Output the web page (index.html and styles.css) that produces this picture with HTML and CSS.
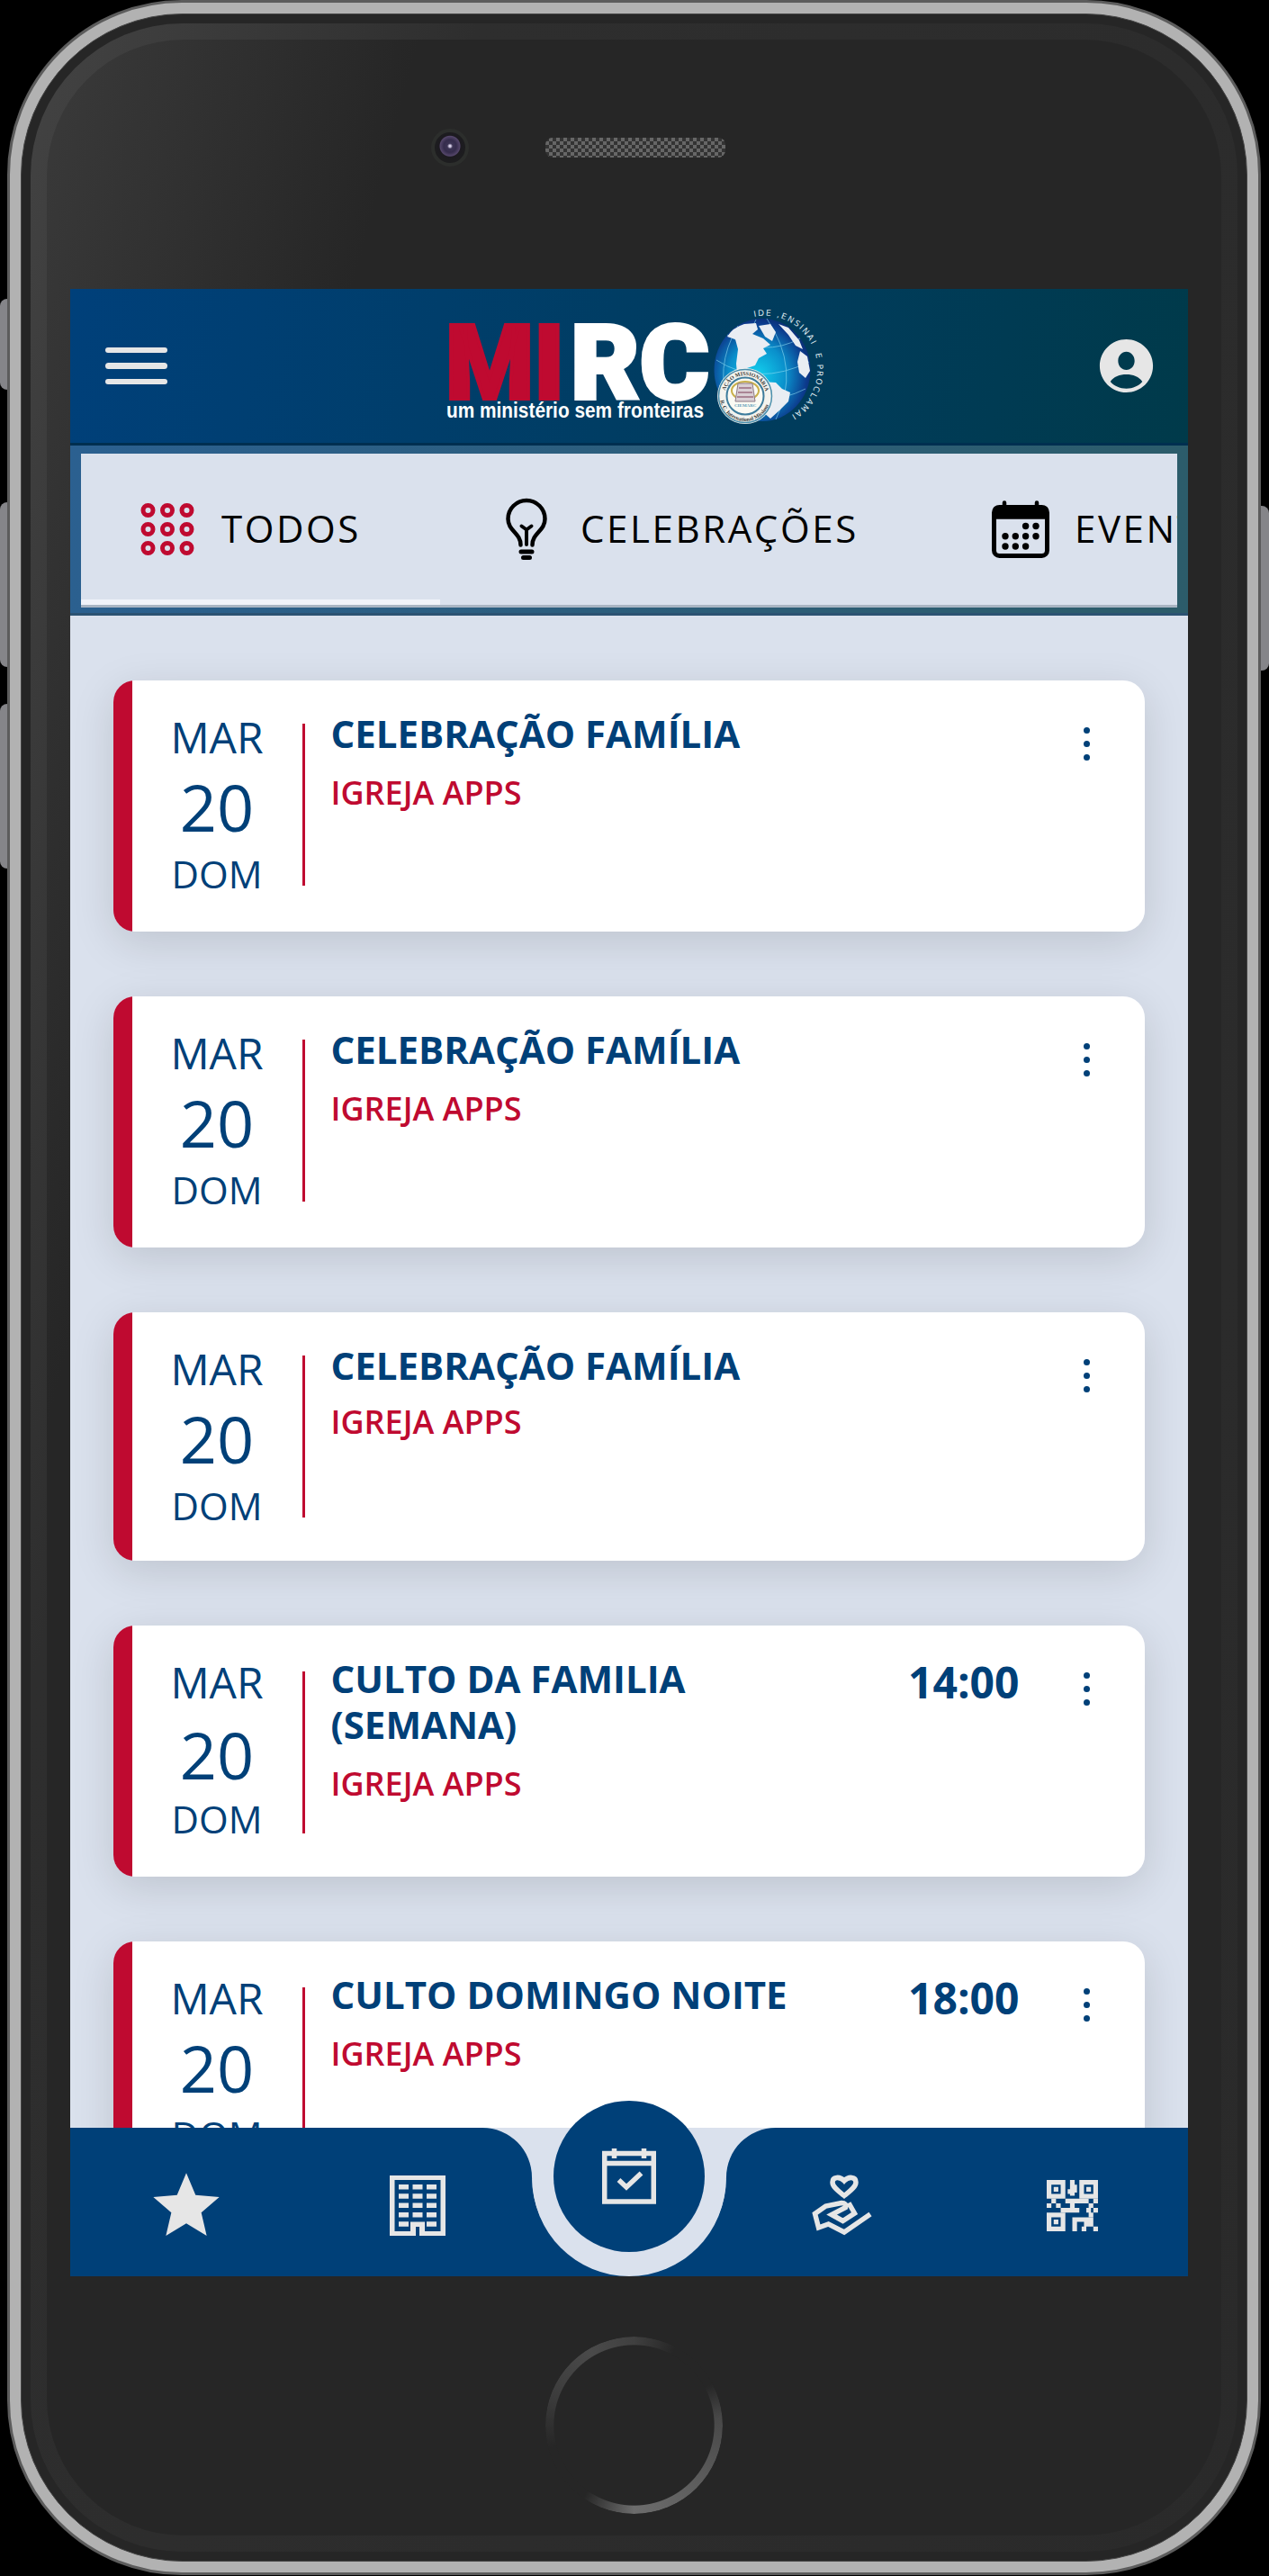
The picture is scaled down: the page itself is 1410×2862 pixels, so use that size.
FILE: index.html
```html
<!DOCTYPE html>
<html lang="pt-BR">
<head>
    <meta charset="UTF-8">
    <meta name="viewport" content="width=device-width, initial-scale=1.0">
    <title>Agenda</title>
    <link rel="stylesheet" href="styles.css">
</head>
<body>
    <div class="phone">
        <span class="side-button mute"></span>
        <span class="side-button volume-up"></span>
        <span class="side-button volume-down"></span>
        <span class="side-button power"></span>
        <div class="rim">
        <div class="edge">
        <div class="face">
            <div class="top-area">
                <span class="camera"></span>
                <span class="speaker"></span>
            </div>

            <div class="screen">
                <header class="header">
                    <div class="burger"><span></span><span></span><span></span></div>
                    <svg class="logo" viewBox="0 0 430 140">
                        <defs>
                            <radialGradient id="sea" cx="45%" cy="55%" r="60%">
                                <stop offset="0" stop-color="#12d0ee"/>
                                <stop offset="0.5" stop-color="#0a8fcb"/>
                                <stop offset="0.85" stop-color="#0c3a8c"/>
                                <stop offset="1" stop-color="#0a2a6c"/>
                            </radialGradient>
                            <path id="ring" d="M348 14 A58 59 0 0 1 372 130"/>
                            <path id="sealTop" d="M315 102 A23 23 0 0 1 361 102"/>
                            <path id="sealBottom" d="M310 102 A28 28 0 0 0 366 102"/>
                        </defs>
                        <text class="logo-mi" x="5" y="105" textLength="132" lengthAdjust="spacingAndGlyphs">MI</text>
                        <text class="logo-rc" x="144" y="105" textLength="154" lengthAdjust="spacingAndGlyphs">RC</text>
                        <text class="logo-sub" x="6" y="126" textLength="286" lengthAdjust="spacingAndGlyphs">um ministério sem fronteiras</text>
                        <!-- globo -->
                        <ellipse cx="357" cy="73" rx="53.500" ry="57" fill="url(#sea)"/>
                        <g fill="none" stroke="#8fdcf2" stroke-width="1" opacity=".6">
                            <path d="M306 62 Q352 92 409 64M318 34 Q358 60 399 38M310 92 Q358 118 405 94"/>
                            <path d="M350 17 Q322 70 344 129M362 16 Q400 72 372 128M330 24 Q302 72 322 118"/>
                        </g>
                        <g fill="#e9edf3">
                            <path d="M318 36 Q324 26 337 22 L350 21 352 28 346 33 358 38 366 45 358 49 362 55 353 60 349 68 340 71 336 75 342 82 350 85 346 88 337 84 329 77 328 66 330 50 327 39Z"/>
                            <path d="M353 24 L366 22 372 31 368 41 360 36Z"/>
                            <path d="M375 22 L386 26 398 40 402 50 394 46 386 34Z"/>
                            <path d="M399 52 L407 58 410 74 405 82 398 76 396 64Z"/>
                            <path d="M356 86 L372 87 379 94 388 98 386 108 376 118 366 127 358 120 360 106 354 98Z"/>
                        </g>
                        <circle cx="338" cy="102" r="31" fill="#f3f3ee"/>
                        <circle cx="338" cy="102" r="29.500" fill="none" stroke="#4a8fae" stroke-width="1.500"/>
                        <circle cx="338" cy="102" r="20.500" fill="#fbfaf3" stroke="#3d7c9c" stroke-width="2"/>
                        <text class="seal-text"><textPath href="#sealTop" startOffset="6">AÇÃO MISSIONÁRIA</textPath></text>
                        <text class="seal-text"><textPath href="#sealBottom" startOffset="5">R. C. International Missions</textPath></text>
                        <ellipse cx="338" cy="96" rx="15" ry="10" fill="none" stroke="#c9b04a" stroke-width="2"/>
                        <path d="M330 88 h16 l3 20 h-22Z" fill="#d9cfd4" stroke="#8c7a86" stroke-width="1"/>
                        <path d="M331 93h14M330 98h16M329 103h18" stroke="#9a6d80" stroke-width="1.500"/>
                        <text class="seal-name" x="326" y="114">CIEMARC</text>
                        <text class="ring-text"><textPath href="#ring">IDE ,ENSINAI&#160; E PROCLAMAI</textPath></text>
                    </svg>
                    <svg class="account" viewBox="0 0 24 24"><path d="M12 2C6.480 2 2 6.480 2 12s4.480 10 10 10 10-4.480 10-10S17.520 2 12 2zm0 4.700c1.700 0 3.100 1.500 3.100 3.400S13.700 13.500 12 13.500s-3.100-1.500-3.100-3.400S10.300 6.700 12 6.700zM12 20.500c-2.500 0-4.700-1-6-2.600 1.200-1.800 3.500-2.700 6-2.700s4.800.9 6 2.700c-1.300 1.600-3.500 2.600-6 2.600z"/></svg>
                </header>

                <nav class="tabs">
                    <div class="tab-list">
                        <a class="tab tab-all active">
                            <svg class="tab-icon" viewBox="0 0 72 72" fill="none" stroke="#bf0a30" stroke-width="5">
                                <circle cx="14.500" cy="15" r="5.500"/><circle cx="36" cy="15" r="5.500"/><circle cx="57.500" cy="15" r="5.500"/>
                                <circle cx="14.500" cy="36" r="5.500"/><circle cx="36" cy="36" r="5.500"/><circle cx="57.500" cy="36" r="5.500"/>
                                <circle cx="14.500" cy="57" r="5.500"/><circle cx="36" cy="57" r="5.500"/><circle cx="57.500" cy="57" r="5.500"/>
                            </svg>
                            <span>TODOS</span>
                        </a>
                        <a class="tab tab-celebrations">
                            <svg class="tab-icon" viewBox="0 0 72 72" fill="none" stroke="#000" stroke-width="4.500" stroke-linecap="round" stroke-linejoin="round">
                                <path d="M29.500 53.500 C29.500 40 15.500 38 15.500 24.500 A20.500 20.500 0 0 1 56.500 24.500 C56.500 38 42.500 40 42.500 53.500"/>
                                <path d="M36 36V53M30.500 32.500L36 36.500 41.500 32.500" stroke-width="4"/>
                                <path d="M30 61H42M32.500 67.500H39.500" stroke-width="5"/>
                            </svg>
                            <span>CELEBRAÇÕES</span>
                        </a>
                        <a class="tab tab-events">
                            <svg class="tab-icon" viewBox="0 0 72 72">
                                <rect x="6.500" y="11.500" width="59" height="54" rx="6" fill="none" stroke="#000" stroke-width="5"/>
                                <path d="M5 24.700V15a5 5 0 0 1 5-5H62a5 5 0 0 1 5 5V24.700Z"/>
                                <path d="M18 6.500V12M54 6.500V12" stroke="#000" stroke-width="4.500" stroke-linecap="round"/>
                                <circle cx="41.600" cy="32.500" r="3.700"/><circle cx="53" cy="32.500" r="3.700"/>
                                <circle cx="19" cy="43.800" r="3.700"/><circle cx="30.300" cy="43.800" r="3.700"/><circle cx="41.600" cy="43.800" r="3.700"/><circle cx="53" cy="43.800" r="3.700"/>
                                <circle cx="19" cy="55" r="3.700"/><circle cx="30.300" cy="55" r="3.700"/><circle cx="41.600" cy="55" r="3.700"/>
                            </svg>
                            <span>EVENTOS</span>
                        </a>
                    </div>
                </nav>

                <main class="events">
                    <article class="card">
                        <div class="date"><span class="month">MAR</span><span class="day">20</span><span class="weekday">DOM</span></div>
                        <div class="divider"></div>
                        <div class="info"><h2>CELEBRAÇÃO FAMÍLIA</h2><p>IGREJA APPS</p></div>
                        <div class="more"><i></i><i></i><i></i></div>
                    </article>
                    <article class="card">
                        <div class="date"><span class="month">MAR</span><span class="day">20</span><span class="weekday">DOM</span></div>
                        <div class="divider"></div>
                        <div class="info"><h2>CELEBRAÇÃO FAMÍLIA</h2><p>IGREJA APPS</p></div>
                        <div class="more"><i></i><i></i><i></i></div>
                    </article>
                    <article class="card short">
                        <div class="date"><span class="month">MAR</span><span class="day">20</span><span class="weekday">DOM</span></div>
                        <div class="divider"></div>
                        <div class="info"><h2>CELEBRAÇÃO FAMÍLIA</h2><p>IGREJA APPS</p></div>
                        <div class="more"><i></i><i></i><i></i></div>
                    </article>
                    <article class="card timed low">
                        <div class="date"><span class="month">MAR</span><span class="day">20</span><span class="weekday">DOM</span></div>
                        <div class="divider"></div>
                        <div class="info"><h2>CULTO DA FAMILIA (SEMANA)</h2><p>IGREJA APPS</p></div>
                        <time>14:00</time>
                        <div class="more"><i></i><i></i><i></i></div>
                    </article>
                    <article class="card timed">
                        <div class="date"><span class="month">MAR</span><span class="day">20</span><span class="weekday">DOM</span></div>
                        <div class="divider"></div>
                        <div class="info"><h2>CULTO DOMINGO NOITE</h2><p>IGREJA APPS</p></div>
                        <time>18:00</time>
                        <div class="more"><i></i><i></i><i></i></div>
                    </article>
                </main>

                <nav class="bottom-nav">
                    <svg class="nav-shape" viewBox="0 0 1242 165">
                        <rect x="440" width="360" height="165" fill="#dae1ed"/>
                        <path d="M0 0H458A55 55 0 0 1 513 55A108 108 0 0 0 729 55A55 55 0 0 1 784 0H1242V165H0Z" fill="#004078"/>
                        <path d="M513.500 57A107.500 108 0 0 0 728.500 57Z" fill="#dae1ed"/>
                    </svg>
                    <svg class="nav-icon" viewBox="0 0 24 24"><path d="M12 17.270L18.180 21l-1.640-7.030L22 9.240l-7.190-.61L12 2 9.190 8.630 2 9.240l5.460 4.730L5.820 21z"/></svg>
                    <svg class="nav-icon" viewBox="0 0 88 88">
                        <path d="M13 10H75V77H46V67H42V77H13ZM18.500 15V72H36V61.500H52V72H69.500V15Z" fill-rule="evenodd"/>
                        <path d="M23 20h11v5.500h-11zM38.500 20h11v5.500h-11zM54 20h11v5.500h-11zM23 30.200h11v5.500h-11zM38.500 30.200h11v5.500h-11zM54 30.200h11v5.500h-11zM23 40.400h11v5.500h-11zM38.500 40.400h11v5.500h-11zM54 40.400h11v5.500h-11zM23 51h11v5.500h-11zM38.500 51h11v5.500h-11zM54 51h11v5.500h-11zM23 61.200h11v5.500h-11zM54 61.200h11v5.500h-11z"/>
                    </svg>
                    <span></span>
                    <svg class="nav-icon line" viewBox="0 0 88 88">
                        <path d="M47 32.500C41 27.500 34 23 34 17.500C34 11.500 42 10.500 47 16C52 10.500 60 11.500 60 17.500C60 23 53 27.500 47 32.500Z"/>
                        <path d="M76 53L47 73 29.500 64 18.500 68 14.500 52.500 26.500 44 44 40.500Q50 40.500 48.500 45.500L33 53.500 45.500 60.500 58.500 52 52 40.500"/>
                    </svg>
                    <svg class="nav-icon" viewBox="0 0 88 88">
                        <g transform="translate(15 15) scale(5.180)">
                            <path d="M0 0H4V4H0ZM1 1V3H3V1ZM7 0H11V4H7ZM8 1V3H10V1ZM0 7H4V11H0ZM1 8V10H3V8Z" fill-rule="evenodd"/>
                            <path d="M1.500 1.500h1v1h-1zM8.500 1.500h1v1h-1zM1.500 8.500h1v1h-1z"/>
                            <path d="M5 0h1v1h.5v1.700h-.5v.7h-1v-.4h-.5v-1h.5zM1 4h1v1h-1zM0 5h1v1h-1zM2 5h1v1h-1zM4 4h4v1h-2v1h1v1h-4v-1h2v-1h-1zM8 4h1v1h-1zM10 4h1v1h-1zM9 5h1v1h-1zM10 6h1v1h-1zM8.500 6h1v1h-1zM9 7h1v1h-1z"/>
                            <path d="M5.500 8h4.500v1h-1v1h-1v-1h-1.500v2h-1zM7.500 10h1v1h-1zM9 9h1v1h-1zM10 10h1v1h-1z"/>
                        </g>
                    </svg>
                    <a class="nav-main">
                        <svg viewBox="0 0 60 62" fill="none" stroke="#e6e6e6" stroke-width="5.500">
                            <rect x="2.750" y="5.500" width="54.500" height="53.500"/>
                            <path d="M2 16.500H58M13.500 0V11M46.500 0V11"/>
                            <path d="M18.500 35L27 43 43.500 27.500"/>
                        </svg>
                    </a>
                </nav>
            </div>

            <div class="home-button"></div>
        </div>
        </div>
        </div>
    </div>
</body>
</html>
```
FILE: styles.css
```css
* {
    box-sizing: border-box;
}

body {
    margin: 0;
    height: 2862px;
    background: #000;
    font-family: "Open Sans", "Noto Sans", sans-serif;
    overflow: hidden;
}

/* phone frame */
.phone {
    position: relative;
    width: 1393px;
    height: 2861px;
    margin: 0 0 0 8px;
    background: #b2b2b2;
    border: 3px solid #5c5c5c;
    border-radius: 194px;
    padding: 12px;
}

.rim {
    height: 100%;
    padding: 10px;
    background: #262626;
    border: 1px solid #444;
    border-radius: 180px;
}

.edge {
    height: 100%;
    padding: 18px;
    border-radius: 169px;
    background: linear-gradient(105deg, #434343, #2e2e2e 480px, #2a2a2a);
}

.face {
    height: 100%;
    padding: 0 26px;
    border-radius: 152px;
    background: linear-gradient(105deg, #3a3a3a, #262626 400px);
}

.side-button {
    position: absolute;
    width: 8px;
    background: #858589;
}

.mute, .volume-up, .volume-down {
    left: -11px;
    border-radius: 8px 0 0 8px;
}

.mute {
    top: 329px;
    height: 101px;
}

.volume-up {
    top: 555px;
    height: 183px;
}

.volume-down {
    top: 779px;
    height: 183px;
}

.power {
    right: -12px;
    top: 559px;
    width: 9px;
    height: 183px;
    border-radius: 0 8px 8px 0;
}

.top-area {
    display: flex;
    align-items: center;
    height: 277px;
    padding: 0 0 38px 401px;
    gap: 85px;
}

.camera {
    width: 42px;
    height: 42px;
    border-radius: 50%;
    border: 4px solid #2c2e2c;
    background: radial-gradient(circle at 50% 45%, #d8d0e8 0 1px, #3c3454 3px, #352c4c 7px, #54466a 11px, #1c1a20 12px, #1d1d1f 16px);
}

.speaker {
    width: 200px;
    height: 22px;
    border-radius: 8px;
    background: repeating-conic-gradient(#666 0 25%, #333 0 50%) 0 0 / 8px 8px;
}

.screen {
    position: relative;
    width: 1242px;
    height: 2208px;
    overflow: hidden;
    background: #dae1ed;
}

/* header */
.header {
    display: flex;
    justify-content: space-between;
    align-items: center;
    height: 174px;
    padding: 0 33px 0 39px;
    background: linear-gradient(100deg, #00407a, #003c5c 65%, #003a4a);
    border-bottom: 3px solid #002f50;
}

.burger {
    display: flex;
    flex-direction: column;
    gap: 11px;
}

.burger span {
    width: 69px;
    height: 6.500px;
    border-radius: 4px;
    background: #e6e6e6;
}

.logo {
    width: 430px;
    height: 140px;
    margin: 2px 0 0 7px;
    overflow: visible;
}

.logo-mi, .logo-rc {
    font: 900 115px Roboto, Inter, sans-serif;
    fill: #bf0a30;
    stroke: #bf0a30;
    stroke-width: 4;
}

.logo-rc {
    fill: #fff;
    stroke: #fff;
}

.logo-sub {
    font: bold 24px "Liberation Sans", sans-serif;
    fill: #fff;
}

.ring-text {
    font: 9px "DejaVu Sans", sans-serif;
    letter-spacing: 1.700px;
    fill: #dfe8ee;
}

.seal-text {
    font: bold 6px "Liberation Serif", serif;
    fill: #333;
}

.seal-name {
    font: bold 5px "Liberation Serif", serif;
    fill: #5a9ab8;
}

.account {
    width: 71px;
    height: 71px;
    fill: #e6e6e6;
}

/* tabs */
.tabs {
    height: 189px;
    padding: 9px 12px;
    background: linear-gradient(100deg, #2b6090, #2c5d76 65%, #2c5c6a);
    border-bottom: 3px solid #2c5272;
}

.tab-list {
    display: flex;
    height: 171px;
    overflow: hidden;
    background: #dae1ed;
    border-bottom: 3px solid #a9b5c3;
}

.tab {
    display: flex;
    flex-shrink: 0;
    align-items: center;
    gap: 24px;
    padding-left: 60px;
    font-size: 42px;
    letter-spacing: 2.600px;
    color: #000;
}

.tab span {
    padding-bottom: 3px;
}

.tab.active {
    box-shadow: inset 0 -6px #f0f3f9;
}

.tab-all {
    width: 399px;
}

.tab-celebrations {
    width: 549px;
}

.tab-icon {
    width: 72px;
    height: 72px;
}

/* event cards */
.events {
    display: flex;
    flex-direction: column;
    gap: 72px;
    padding: 72px 48px 0;
}

.card {
    display: flex;
    flex-shrink: 0;
    height: 279px;
    padding-left: 21px;
    background: linear-gradient(90deg, #bf0a30 21px, #fff 21px);
    border-radius: 24px;
    box-shadow: 0 12px 48px rgba(0, 0, 0, .13);
    color: #004078;
}

.card.short {
    height: 276px;
}

.date {
    display: flex;
    flex-direction: column;
    align-items: center;
    width: 189px;
    padding: 33px 1px 0 0;
}

.month {
    font-size: 48px;
    line-height: 60px;
}

.day {
    margin: 7px 0 10px;
    font-size: 72px;
    line-height: 80px;
}

.weekday {
    font-size: 42px;
    line-height: 50px;
}

.low .day {
    margin: 10px 0 7px;
}

.divider {
    width: 3px;
    height: 180px;
    margin-top: 48px;
    background: #bf0a30;
}

.timed .divider {
    margin-top: 51px;
}

.info {
    flex: 1;
    padding: 33px 0 0 28.500px;
}

.info h2 {
    max-width: 560px;
    margin: 0;
    font-size: 42px;
    font-weight: 700;
    line-height: 51px;
}

.info p {
    margin: 16px 0 0;
    font-size: 36px;
    font-weight: 600;
    line-height: 50px;
    color: #bf0a30;
}

.short .info p {
    margin-top: 13px;
}

.card time {
    padding-top: 33px;
    font-size: 48px;
    font-weight: 700;
    line-height: 60px;
}

.more {
    display: flex;
    flex-direction: column;
    gap: 7.500px;
    padding: 51.500px 61px 0 71px;
}

.more i {
    width: 7.500px;
    height: 7.500px;
    border-radius: 50%;
    background: #004078;
}

/* bottom navigation */
.bottom-nav {
    position: absolute;
    left: 0;
    bottom: 0;
    display: grid;
    grid-template-columns: 257px 257px 214px 257px 257px;
    place-items: center;
    width: 100%;
    height: 165px;
    padding-top: 9px;
}

.nav-shape {
    position: absolute;
    left: 0;
    top: 0;
    width: 1242px;
    height: 165px;
}

.nav-icon {
    position: relative;
    width: 88px;
    height: 88px;
    fill: #e6e6e6;
}

.nav-icon.line {
    fill: none;
    stroke: #e6e6e6;
    stroke-width: 5.500;
}

.nav-main {
    position: absolute;
    left: 537px;
    top: -30px;
    display: flex;
    align-items: center;
    justify-content: center;
    width: 168px;
    height: 168px;
    border-radius: 50%;
    background: #004078;
}

.nav-main svg {
    width: 60px;
    height: 62px;
}

.home-button {
    width: 197px;
    height: 197px;
    margin: 67px auto 0;
    border-radius: 50%;
    background: conic-gradient(#404040, #262626 28deg 62deg, #484848 85deg, #5c5c5c 130deg, #6c6c6c 180deg, #262626 215deg 255deg, #3c3c3c 290deg, #4a4a4a 330deg, #404040);
    -webkit-mask: radial-gradient(closest-side, transparent 90%, #000 91%);
    mask: radial-gradient(closest-side, transparent 90%, #000 91%);
}
```
